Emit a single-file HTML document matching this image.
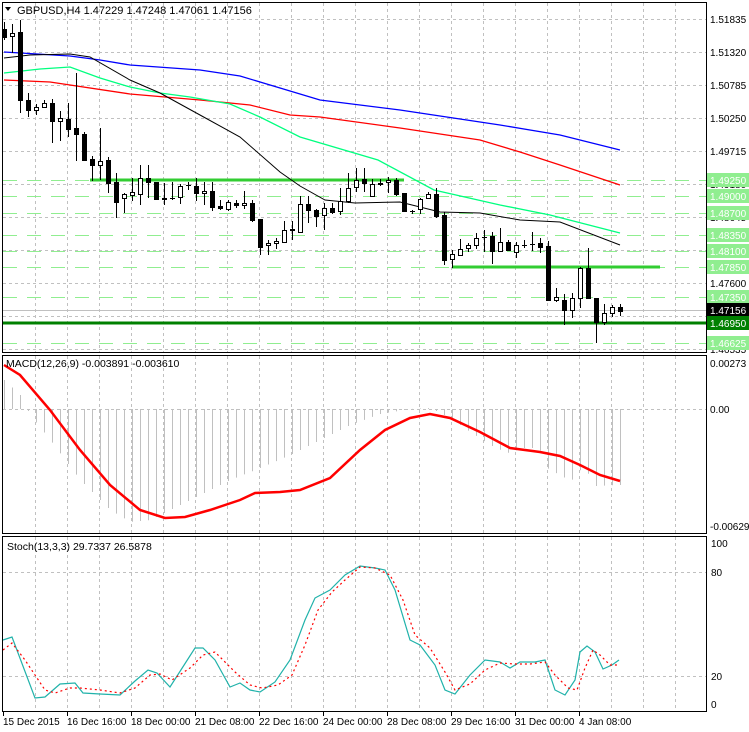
<!DOCTYPE html>
<html><head><meta charset="utf-8"><style>
html,body{margin:0;padding:0;background:#fff;width:749px;height:732px;overflow:hidden}
svg{display:block;font-family:"Liberation Sans",Tahoma,sans-serif;font-size:11px}
</style></head><body>
<svg id="s" width="749" height="732" xmlns="http://www.w3.org/2000/svg">
<rect width="749" height="732" fill="#fff"/>
<g id="grid" stroke="#c0c0c0" stroke-dasharray="3,3" stroke-width="1"></g>
<g id="lv"></g>
<g id="ma" fill="none"></g>
<g id="cd"></g>
<g id="ind" fill="none"></g>
<g fill="none" stroke="#000" stroke-width="1">
<rect x="2.5" y="2.5" width="704" height="350"/>
<rect x="2.5" y="355.5" width="704" height="178"/>
<rect x="2.5" y="536.5" width="704" height="175"/>
</g>
<g id="ticks" stroke="#000"></g>
<polygon points="5,7 11,7 8,11" fill="#000"/>
<text x="17" y="14" fill="#000">GBPUSD,H4  1.47229 1.47248 1.47061 1.47156</text>
<text x="6" y="367" fill="#000" font-size="10.5">MACD(12,26,9) -0.003891 -0.003610</text>
<text x="7" y="550" fill="#000" font-size="10.5">Stoch(13,3,3) 29.7337 26.5878</text>
<g fill="#000" font-size="10">
<text x="710" y="23">1.51835</text><text x="710" y="56">1.51320</text><text x="710" y="89">1.50785</text>
<text x="710" y="122">1.50250</text><text x="710" y="155">1.49715</text><text x="710" y="188">1.49180</text>
<text x="710" y="221">1.48645</text><text x="710" y="287">1.47600</text><text x="710" y="353">1.46535</text>
<text x="710" y="367">0.00273</text><text x="710" y="413">0.00</text><text x="710" y="530">-0.006293</text>
<text x="711" y="547">100</text><text x="711" y="576">80</text><text x="711" y="680">20</text><text x="711" y="708">0</text>
</g>
<g id="lbl" font-size="10"></g>
<g fill="#000" font-size="10">
<text x="3" y="725">15 Dec 2015</text><text x="67" y="725">16 Dec 16:00</text><text x="131" y="725">18 Dec 00:00</text>
<text x="195" y="725">21 Dec 08:00</text><text x="259" y="725">22 Dec 16:00</text><text x="323" y="725">24 Dec 00:00</text>
<text x="387" y="725">28 Dec 08:00</text><text x="451" y="725">29 Dec 16:00</text><text x="515" y="725">31 Dec 00:00</text>
<text x="579" y="725">4 Jan 08:00</text>
</g>
</svg>
<script>
var NS="http://www.w3.org/2000/svg";
function el(p,t,a,txt){var e=document.createElementNS(NS,t);for(var k in a)e.setAttribute(k,a[k]);if(txt!=null)e.textContent=txt;document.getElementById(p).appendChild(e);return e;}
for(var x=35;x<706;x+=32){el('grid','line',{x1:x+.5,y1:3,x2:x+.5,y2:352});el('grid','line',{x1:x+.5,y1:356,x2:x+.5,y2:533});el('grid','line',{x1:x+.5,y1:537,x2:x+.5,y2:711});}
[19,52,85,118,151,184,217,250,283,316,349].forEach(function(y){el('grid','line',{x1:3,y1:y+.5,x2:706,y2:y+.5});});
el('grid','line',{x1:3,y1:409.5,x2:706,y2:409.5});
el('grid','line',{x1:3,y1:572.5,x2:706,y2:572.5});el('grid','line',{x1:3,y1:676.5,x2:706,y2:676.5});
[180,196,213,235,251,297,343].forEach(function(y){el('lv','line',{x1:3,y1:y+.5,x2:706,y2:y+.5,stroke:'#90ee90','stroke-dasharray':'14,10'});});
el('lv','line',{x1:3,y1:267.5,x2:706,y2:267.5,stroke:'#90ee90','stroke-dasharray':'14,10'});
el('lv','line',{x1:90,y1:180,x2:404,y2:180,stroke:'#32cd32','stroke-width':3});
el('lv','line',{x1:452,y1:267,x2:660,y2:267,stroke:'#32cd32','stroke-width':3});
el('lv','line',{x1:3,y1:310.5,x2:706,y2:310.5,stroke:'#c0c0c0'});
el('lv','line',{x1:3,y1:323,x2:706,y2:323,stroke:'#008000','stroke-width':3});
function pl(p,pts,c,w,extra){var a={points:pts,stroke:c,'stroke-width':w||1,fill:'none'};for(var k in extra)a[k]=extra[k];el(p,'polyline',a);}
pl('ma','4,52 70,56 100,60 130,65 200,70 240,76 320,100 400,110 500,125 560,135 620,150','#0000ff',1.3);
pl('ma','4,80 50,82 130,94 200,100 250,105 290,115 320,117 400,128 480,140 520,152 560,165 620,185','#ff0000',1.3);
pl('ma','4,73 40,69 70,67 100,78 130,87 160,93 190,97 230,104 260,117 300,137 378,160 434,190 500,205 550,215 620,233','#00ff7f',1.3);
pl('ma','4,58 30,55 70,54 90,57 130,80 160,93 200,115 240,137 280,172 300,186 325,200 355,203 400,202 440,212 480,213 520,220 560,222 620,245','#000',1);
var C=[[29,37,22,40],[36,33,24,53],[32,100,20,113],[100,110,93,117],[110,107,104,115],[107,103,100,108],[103,121,99,143],[121,118,111,141],[119,129,103,137],[128,134,73,161],[134,160,132,161],[159,165,156,181],[165,161,128,180],[160,183,157,193],[182,202,173,218],[198,194,193,213],[195,192,178,201],[194,178,165,205],[178,182,165,198],[182,199,182,200],[198,199,183,205],[198,198,182,200],[197,186,184,204],[185,185,182,190],[186,193,178,201],[193,191,182,205],[191,207,182,211],[206,208,200,210],[209,202,200,211],[203,205,200,208],[205,203,191,209],[203,220,200,222],[219,247,219,255],[245,243,240,255],[243,241,238,249],[242,230,221,243],[229,230,221,240],[232,204,196,232],[204,210,196,223],[210,216,209,227],[215,208,203,230],[208,212,203,214],[211,201,188,215],[201,188,173,203],[187,180,168,192],[179,183,168,192],[196,184,179,197],[184,183,179,186],[182,180,177,193],[180,194,178,196],[193,211,193,212],[211,211,210,214],[209,199,198,214],[198,194,192,199],[194,216,188,218],[215,260,212,265],[259,254,250,268],[255,249,239,256],[248,245,243,252],[245,238,233,249],[237,237,230,252],[236,251,232,264],[251,242,228,252],[242,250,240,251],[252,245,242,258],[245,245,240,248],[244,244,232,251],[243,247,238,253],[246,300,241,301],[300,297,288,302],[300,310,294,325],[310,298,293,318],[298,268,267,308],[268,298,248,299],[298,322,298,343],[322,313,304,325],[313,307,305,317],[307,311,304,316]];
C.forEach(function(c,i){var x=4+8*i;el('cd','line',{x1:x+.5,y1:c[2],x2:x+.5,y2:c[3],stroke:'#000'});
var t=Math.min(c[0],c[1]),b=Math.max(c[0],c[1]);
if(b-t<1){el('cd','line',{x1:x-2,y1:t+.5,x2:x+3,y2:t+.5,stroke:'#000'});}
else if(c[1]<c[0]){el('cd','rect',{x:x-1.5,y:t+.5,width:4,height:b-t,fill:'#fff',stroke:'#000'});}
else{el('cd','rect',{x:x-2,y:t,width:5,height:b-t+1,fill:'#000'});}});
function interp(pts,x){for(var i=0;i<pts.length-1;i++){if(x>=pts[i][0]&&x<=pts[i+1][0]){var f=(x-pts[i][0])/(pts[i+1][0]-pts[i][0]);return pts[i][1]+f*(pts[i+1][1]-pts[i][1]);}}return pts[pts.length-1][1];}
var H=[[4,380],[20,395],[30,415],[50,440],[80,480],[110,510],[130,522],[150,520],[170,510],[200,495],[230,480],[260,468],[290,455],[320,440],[350,425],[380,414],[410,409],[430,408],[450,418],[470,432],[490,445],[507,453],[523,448],[539,448],[547,468],[563,477],[571,481],[579,470],[587,472],[595,486],[619,485]];
for(var i=0;i<78;i++){var x=4+8*i;var y=interp(H,x);el('ind','line',{x1:x+.5,y1:409,x2:x+.5,y2:y,stroke:'#c0c0c0','stroke-width':1});}
pl('ind','4,365 20,375 50,410 80,450 110,485 140,510 165,518 185,517 210,510 240,500 255,493 280,492 300,490 330,478 360,450 385,430 410,418 430,414 450,418 480,432 510,448 540,452 560,456 580,465 600,475 620,481','#ff0000',2.5);
var S='3,640 12,637 35,698 45,697 60,684 75,683 83,693 100,694 120,695 135,681 148,670 157,673 170,687 195,648 203,648 215,660 230,687 240,683 250,690 260,692 275,682 290,660 305,620 315,598 330,590 345,575 360,566 375,568 385,570 395,590 410,640 420,645 435,665 445,690 455,694 470,675 485,660 500,662 510,668 520,662 535,662 545,660 555,690 565,695 575,680 580,652 587,646 595,652 603,669 612,665 619,660';
pl('ind',S,'#20b2aa',1.2);
var R='3,650 12,643 25,660 45,690 55,693 70,688 80,688 100,690 120,693 135,688 150,675 160,674 172,680 190,668 203,655 215,652 235,672 250,685 262,688 278,685 292,675 305,645 318,610 332,592 345,580 360,567 375,568 390,575 403,600 415,635 430,648 445,672 455,690 470,684 485,670 500,663 515,664 530,664 545,662 555,675 568,688 577,690 585,668 593,650 600,655 610,665 619,665';
pl('ind',R,'#ff0000',1.2,{'stroke-dasharray':'2,3'});
[3,67,131,195,259,323,387,451,515,579].forEach(function(x){el('ticks','line',{x1:x+.5,y1:712,x2:x+.5,y2:716});});
function lab(y,t,bg,fg){el('lbl','rect',{x:707,y:y-7,width:42,height:14,fill:bg});el('lbl','text',{x:710,y:y+4,fill:fg},t);}
lab(180,'1.49250','#90ee90','#fff');lab(196,'1.49000','#90ee90','#fff');lab(213,'1.48700','#90ee90','#fff');
lab(235,'1.48350','#90ee90','#fff');lab(251,'1.48100','#90ee90','#fff');lab(267,'1.47850','#90ee90','#fff');
lab(297,'1.47350','#90ee90','#fff');lab(310,'1.47156','#000','#fff');lab(323,'1.46950','#008000','#fff');
lab(343,'1.46625','#90ee90','#fff');
</script>
</body></html>
